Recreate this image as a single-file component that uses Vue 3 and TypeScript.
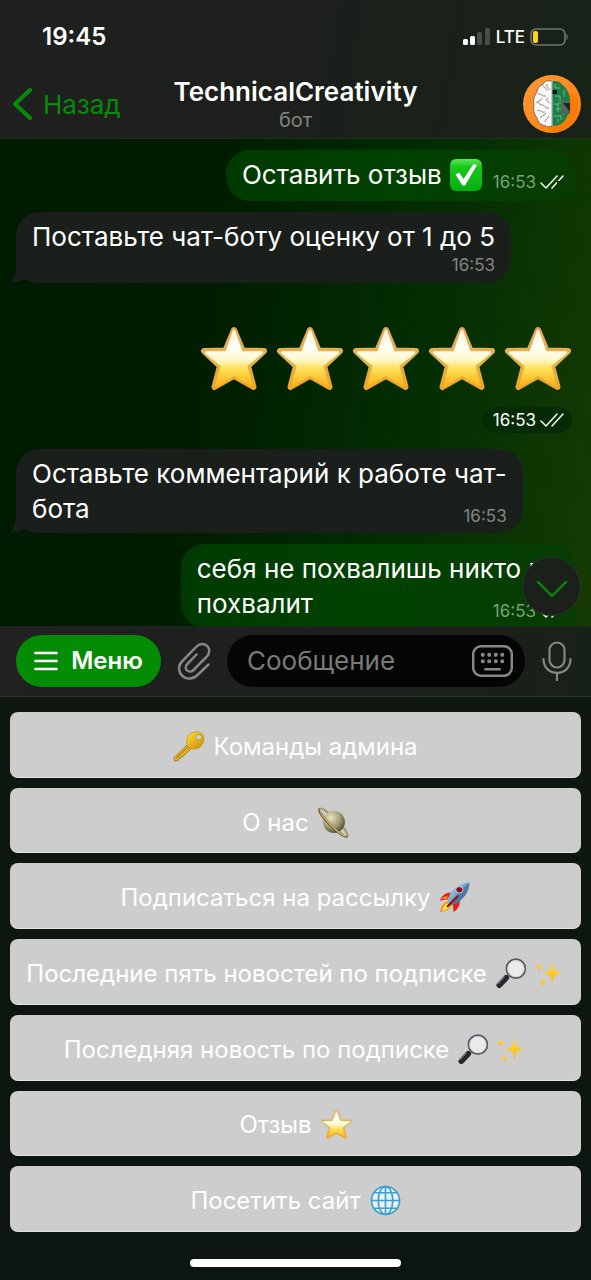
<script setup lang="ts">
import { ref } from 'vue'

interface Message {
  id: number
  out: boolean
  text: string
  time: string
  icon?: string
  layout: 'inline' | 'stacked' | 'overlay'
}

interface Key {
  label: string
  before?: string[]
  after?: string[]
}

const firstMessages: Message[] = [
  { id: 1, out: true, text: 'Оставить отзыв', icon: 'check', time: '16:53', layout: 'inline' },
  { id: 2, out: false, text: 'Поставьте чат-боту оценку от 1 до 5', time: '16:53', layout: 'stacked' },
]

const lastMessages: Message[] = [
  { id: 4, out: false, text: 'Оставьте комментарий к работе чат-\nбота', time: '16:53', layout: 'overlay' },
  { id: 5, out: true, text: 'себя не похвалишь никто не\nпохвалит', time: '16:53', layout: 'overlay' },
]

const keys: Key[] = [
  { label: 'Команды админа', before: ['key'] },
  { label: 'О нас', after: ['planet'] },
  { label: 'Подписаться на рассылку', after: ['rocket'] },
  { label: 'Последние пять новостей по подписке', after: ['lens', 'sparkles'] },
  { label: 'Последняя новость по подписке', after: ['lens', 'sparkles'] },
  { label: 'Отзыв', after: ['star'] },
  { label: 'Посетить сайт', after: ['globe'] },
]

const draft = ref('')
</script>

<template>
  <div class="screen">
    <svg class="defs" width="0" height="0" aria-hidden="true">
      <defs>
        <linearGradient id="g-star" x1="0" y1="0" x2="0" y2="1">
          <stop offset="0" stop-color="#fff3dc" />
          <stop offset=".3" stop-color="#fffef6" />
          <stop offset=".52" stop-color="#fff8cf" />
          <stop offset=".7" stop-color="#ffdf55" />
          <stop offset="1" stop-color="#fdb31a" />
        </linearGradient>
        <linearGradient id="g-edge" x1="0" y1="0" x2="0" y2="1">
          <stop offset="0" stop-color="#e9a455" />
          <stop offset=".5" stop-color="#e0b552" />
          <stop offset="1" stop-color="#eea42c" />
        </linearGradient>
        <linearGradient id="g-check" x1="0" y1="0" x2="0" y2="1">
          <stop offset="0" stop-color="#5fe35a" />
          <stop offset=".25" stop-color="#18c81c" />
          <stop offset="1" stop-color="#04ae12" />
        </linearGradient>
        <linearGradient id="g-key" x1="0" y1="0" x2="1" y2="1">
          <stop offset="0" stop-color="#ffdf3c" />
          <stop offset="1" stop-color="#c98a05" />
        </linearGradient>
        <radialGradient id="g-planet" cx=".35" cy=".3" r=".75">
          <stop offset="0" stop-color="#e8e4bc" />
          <stop offset=".55" stop-color="#a5a27b" />
          <stop offset="1" stop-color="#4e4c34" />
        </radialGradient>
        <linearGradient id="g-rocket" x1="0" y1="0" x2="1" y2="1">
          <stop offset="0" stop-color="#cfe6f5" />
          <stop offset=".5" stop-color="#6fa3cb" />
          <stop offset="1" stop-color="#2c4f7c" />
        </linearGradient>
        <linearGradient id="g-spark" x1="0" y1="0" x2="0" y2="1">
          <stop offset="0" stop-color="#ffd84c" />
          <stop offset="1" stop-color="#f5b915" />
        </linearGradient>
        <linearGradient id="g-avatar" x1="0" y1="0" x2="1" y2="1">
          <stop offset="0" stop-color="#ff9a3c" />
          <stop offset="1" stop-color="#ff7b05" />
        </linearGradient>
      </defs>
      <symbol id="star" viewBox="0 0 68 66">
        <path d="M34 4 42.500 24.500 64 25 48 40 53.500 61 34 50 14.500 61 20 40 4 25 25.500 24.500Z" fill="url(#g-edge)" stroke="url(#g-edge)" stroke-width="6" stroke-linejoin="round" />
        <path d="M34 5 41.500 26.500 62 26.500 46 39.500 51.500 59.500 34 48.500 16.500 59.500 22 39.500 6 26.500 26.500 26.500Z" fill="url(#g-star)" stroke="url(#g-star)" stroke-width="2.500" stroke-linejoin="round" />
      </symbol>
      <symbol id="check" viewBox="0 0 32 32">
        <rect width="32" height="32" rx="6" fill="url(#g-check)" />
        <path d="M5.500 15.500 9 13.500 13.500 20 23.500 5 27 6 15 26.500 12.500 26.500Z" fill="#fff" />
      </symbol>
      <symbol id="key" viewBox="0 0 32 32">
        <path d="m15.500 13.500 4 4L10 26.500 8.500 26l-.5 2-2 .3-.6 2.200-3.900.5L1 27.500Z" fill="url(#g-key)" stroke="#8f6508" stroke-width=".7" />
        <path d="M3 28 16 16" stroke="#8f6508" stroke-width="1" />
        <path d="M17 3.500C21-.5 28 0 31 4c2.500 4 .5 9.500-3 12.500-4 3-9 3-12 0s-2.500-9.500 1-13Z" fill="url(#g-key)" stroke="#c08d0a" stroke-width=".6" />
        <ellipse cx="26.500" cy="6.500" rx="3.200" ry="2.800" fill="#d6d2bd" stroke="#a3790c" stroke-width=".6" />
      </symbol>
      <symbol id="planet" viewBox="0 0 32 32">
        <g transform="rotate(45 16 16)">
          <ellipse cx="16" cy="16" rx="20" ry="4.200" fill="none" stroke="#a39a72" stroke-width="2.200" />
        </g>
        <circle cx="16.500" cy="15.500" r="11.300" fill="url(#g-planet)" />
        <g transform="rotate(45 16 16)" fill="none">
          <path d="M-4 16c0 5.600 40 5.600 40 0" stroke="#7c6331" stroke-width="2.600" />
          <path d="M-3 16c1 5 37 5 38 0" stroke="#dacb93" stroke-width="1" />
        </g>
      </symbol>
      <symbol id="rocket" viewBox="0 0 32 32">
        <path d="M14 11C8 10 3 14 1 19l8-1Z" fill="#e3231b" />
        <path d="M2 17 9 14l-1 4Z" fill="#ff8b23" />
        <path d="M21 18c1.500 5-1 10-6 13l-1-9Z" fill="#e3231b" />
        <path d="M9 20C4 21 2 26 1 31c5-1 10-2 12-7Z" fill="#f69219" />
        <path d="M9.500 22c-4 1-5 4-6 7.500 4-1 7-2 8-5.500Z" fill="#ffee4a" />
        <path d="M31.500.5C23 1 16 5 12 11L8.500 19l4.500 5 7.500-4C27 15.500 31 9 31.500.5Z" fill="url(#g-rocket)" />
        <path d="M31.500.5C22 8 15 15 13 24l7.500-4C27 15.500 31 9 31.500.5Z" fill="#3d6d9c" opacity=".6" />
        <path d="M19 15 9 25" stroke="#8b1510" stroke-width="2.400" stroke-linecap="round" />
        <ellipse cx="21" cy="8" rx="3.700" ry="3.200" fill="#7e1016" stroke="#dbe3ea" stroke-width=".8" />
      </symbol>
      <symbol id="lens" viewBox="0 0 32 32">
        <path d="m14.500 17.500-4 4" stroke="#999" stroke-width="3" />
        <path d="m10.500 20.500-7 7.500" stroke="#25272a" stroke-width="6" stroke-linecap="round" />
        <path d="m8.500 19.500-6.500 7" stroke="#777b80" stroke-width="1.200" stroke-linecap="round" />
        <circle cx="20.500" cy="11" r="9.800" fill="#e9eaec" stroke="#55595e" stroke-width="1.700" />
        <circle cx="20.500" cy="11" r="8.500" fill="none" stroke="#bfc3c7" stroke-width=".8" />
      </symbol>
      <symbol id="sparkles" viewBox="0 0 32 32" fill="url(#g-spark)">
        <path d="M19 3.500c1 8.500 2.500 10.500 10 12-7.500 1.500-9 3.500-10 12-1-8.500-2.500-10.500-10-12 7.500-1.500 9-3.500 10-12Z" />
        <path d="M5 4c.6 3.500 1.400 4.300 4.500 5C6.400 9.700 5.600 10.500 5 14c-.6-3.500-1.400-4.300-4.500-5C3.600 8.300 4.400 7.500 5 4Z" />
        <path d="M9 20c.6 3.500 1.200 4.300 4 5-2.800.7-3.400 1.500-4 5-.6-3.500-1.200-4.300-4-5 2.800-.7 3.400-1.500 4-5Z" />
      </symbol>
      <symbol id="globe" viewBox="0 0 32 32">
        <circle cx="16" cy="16" r="14.500" fill="#e8f2fa" />
        <g fill="none" stroke="#3c9fce" stroke-width="1.700">
          <circle cx="16" cy="16" r="14.500" />
          <ellipse cx="16" cy="16" rx="7.500" ry="14.500" />
          <path d="M16 1.500v29M1.500 16h29M4.500 8h23M4.500 24h23" />
        </g>
      </symbol>
      <symbol id="ticks" viewBox="0 0 24 16">
        <path d="m1 9 5 5L17 2M12 14 23 2" fill="none" stroke="currentColor" stroke-width="1.600" stroke-linecap="round" stroke-linejoin="round" />
      </symbol>
      <symbol id="tail" viewBox="0 0 24 20">
        <path d="M6 0C6 9 5 15 0 19.500c6 .3 11-1.500 14-3.500l10 4V0Z" fill="currentColor" />
      </symbol>
    </svg>

    <header class="top">
      <div class="status">
        <time class="clock">19:45</time>
        <div class="signals">
          <svg class="bars" viewBox="0 0 28 18" aria-hidden="true">
            <rect x="0" y="11" width="5" height="6" rx="1.500" fill="#fff" />
            <rect x="7" y="8" width="5" height="9" rx="1.500" fill="#fff" />
            <rect x="14" y="4" width="5" height="13" rx="1.500" fill="#474d48" />
            <rect x="22" y="0" width="5" height="17" rx="1.500" fill="#474d48" />
          </svg>
          <span class="lte">LTE</span>
          <svg class="battery" viewBox="0 0 38 18" aria-hidden="true">
            <rect x="1" y="1" width="34" height="16" rx="5" fill="none" stroke="#727672" stroke-width="1.600" />
            <path d="M36.500 6c1.600.5 1.600 5.500 0 6Z" fill="#727672" />
            <rect x="3" y="3" width="5" height="12" rx="2" fill="#ffd60a" />
          </svg>
        </div>
      </div>
      <div class="nav">
        <button class="back" type="button">
          <svg viewBox="0 0 22 34" aria-hidden="true">
            <path d="M20 3 5 17l15 14" fill="none" stroke="currentColor" stroke-width="4" stroke-linecap="round" stroke-linejoin="round" />
          </svg>
          <span>Назад</span>
        </button>
        <div class="peer">
          <h1>TechnicalCreativity</h1>
          <p>бот</p>
        </div>
        <button class="avatar" type="button" aria-label="TechnicalCreativity">
          <svg viewBox="0 0 58 58" aria-hidden="true">
            <circle cx="29" cy="29" r="29" fill="url(#g-avatar)" />
            <path d="M38 9 55 24a29 29 0 0 1-23 34L20 49Z" fill="#f27300" opacity=".55" />
            <path d="M29 6.500c-4-2-8 0-9 3-4 1-6 5-6 8-3 3-4 8-3 12-1 5 0 10 3 13 1 5 4 8 8 8 2 2 5 1.500 7 0Z" fill="#f7f7f5" stroke="#5b5b58" stroke-width=".8" />
            <path d="M20 11c3 1 2 4 5 4M15 19c4-1 4 3 8 2M13 27c3 0 3 3 6 3s3 4 7 3M14 36c4-2 4 2 8 1M17 43c2-3 5-2 6-5M24 9c-1 3 2 4 3 6M25 23c-3 2 0 4 2 5M22 47c0-3 3-3 4-6M19 23c-1 3-3 2-4 4" fill="none" stroke="#77706f" stroke-width=".8" />
            <path d="M29 6.500c4-1.500 8 0 10 3 4 3 7 8 8 14 1 8-1 15-4 20-3 5-7 8-14 7Z" fill="#1e7d49" />
            <path d="M32 9v4h5M32 21h5v5M31 29h4v8M31 41h7v4M35 47v-3M41 15v7M40 40l3-5M33 34h5M38 28h-3" fill="none" stroke="#69bd82" stroke-width="1" />
            <path d="M29 15h5v4h-5Z" fill="#111" />
            <path d="M38 26h9v13h-9Z" fill="#4f6a58" />
            <path d="M40 28h7v9Z" fill="#202422" />
            <path d="M29 6v45" stroke="#d9e0da" stroke-width=".8" />
          </svg>
        </button>
      </div>
    </header>

    <main class="chat">
      <article v-for="m in firstMessages" :key="m.id" class="bubble" :class="[m.layout, m.out ? 'out' : 'in']">
        <p class="text">{{ m.text }}<svg v-if="m.icon" class="emoji"><use :href="'#' + m.icon" /></svg></p>
        <span class="meta"><time>{{ m.time }}</time><svg v-if="m.out" class="ticks"><use href="#ticks" /></svg></span>
        <svg class="tail" aria-hidden="true"><use href="#tail" /></svg>
      </article>

      <article class="sticker">
        <div class="stars" role="img" aria-label="5">
          <svg v-for="n in 5" :key="n" class="big-star"><use href="#star" /></svg>
        </div>
        <span class="meta pill"><time>16:53</time><svg class="ticks"><use href="#ticks" /></svg></span>
      </article>

      <article v-for="m in lastMessages" :key="m.id" class="bubble" :class="[m.layout, m.out ? 'out' : 'in']">
        <p class="text">{{ m.text }}</p>
        <span class="meta"><time>{{ m.time }}</time><svg v-if="m.out" class="ticks"><use href="#ticks" /></svg></span>
        <svg class="tail" aria-hidden="true"><use href="#tail" /></svg>
      </article>

      <button class="to-bottom" type="button" aria-label="Вниз">
        <svg viewBox="0 0 30 18" aria-hidden="true">
          <path d="m1 2 14 14L29 2" fill="none" stroke="currentColor" stroke-width="2.400" stroke-linecap="round" stroke-linejoin="round" />
        </svg>
      </button>
    </main>

    <form class="composer" @submit.prevent>
      <button class="menu" type="button">
        <svg viewBox="0 0 24 20" aria-hidden="true">
          <path d="M1.500 2h21M1.500 10h21M1.500 18h21" stroke="currentColor" stroke-width="2.600" stroke-linecap="round" />
        </svg>
        <span>Меню</span>
      </button>
      <button class="tool clip" type="button" aria-label="Прикрепить">
        <svg viewBox="0 0 34 38" aria-hidden="true">
          <path d="M31.500 22.500 20.500 33c-4.500 4.500-11 4.800-15 1-4.500-4-4.500-10.500-.5-14.500L19 5c3.500-3.800 8-4 11-1.200 3.200 3 3 7.500-.5 11L16.500 28c-2 2-4.800 2-6.500.4-1.800-1.700-1.700-4.400.3-6.400l9.200-9.500" fill="none" stroke="currentColor" stroke-width="2.500" stroke-linecap="round" />
        </svg>
      </button>
      <div class="field">
        <input v-model="draft" type="text" placeholder="Сообщение" aria-label="Сообщение" />
        <button class="tool kbd" type="button" aria-label="Клавиатура">
          <svg viewBox="0 0 40 31" aria-hidden="true">
            <rect x="1.200" y="1.200" width="37.600" height="28.600" rx="7.500" fill="none" stroke="currentColor" stroke-width="2.400" />
            <path d="M10.500 9.500h.01M16.800 9.500h.01M23.200 9.500h.01M29.500 9.500h.01M10.500 15.800h.01M16.800 15.800h.01M23.200 15.800h.01M29.500 15.800h.01" stroke="currentColor" stroke-width="4" stroke-linecap="round" />
            <path d="M13 23.500h14" stroke="currentColor" stroke-width="2.400" stroke-linecap="round" />
          </svg>
        </button>
      </div>
      <button class="tool mic" type="button" aria-label="Голосовое сообщение">
        <svg viewBox="0 0 30 40" aria-hidden="true">
          <g fill="none" stroke="currentColor" stroke-width="2.200" stroke-linecap="round">
            <rect x="7.500" y="1.500" width="15" height="25" rx="7.500" />
            <path d="M1.500 18c0 18.500 27 18.500 27 0M15 32v7" />
          </g>
        </svg>
      </button>
    </form>

    <section class="keyboard">
      <div class="keys">
        <button v-for="k in keys" :key="k.label" class="key" type="button">
          <svg v-for="e in k.before" :key="e" class="emoji"><use :href="'#' + e" /></svg>
          <span>{{ k.label }}</span>
          <svg v-for="e in k.after" :key="e" class="emoji"><use :href="'#' + e" /></svg>
        </button>
      </div>
      <div class="home"></div>
    </section>
  </div>
</template>

<style>
html,
body {
  background: #0d1710;
}
</style>

<style scoped>
* {
  box-sizing: border-box;
}

.screen {
  display: flex;
  flex-direction: column;
  height: 100vh;
  overflow: hidden;
  color: #fff;
  font-family: Inter, "Noto Sans", sans-serif;
  font-size: 26px;
}

.defs {
  position: absolute;
}

svg {
  display: block;
  flex: none;
}

h1,
p {
  margin: 0;
}

button,
input {
  margin: 0;
  padding: 0;
  border: 0;
  background: none;
  color: inherit;
  font: inherit;
}

.top {
  flex: none;
  background: linear-gradient(100deg, #1f201f 0%, #1c1f1c 50%, #182217 100%);
  border-bottom: 1px solid #1d331d;
}

.status {
  display: flex;
  align-items: center;
  justify-content: space-between;
  height: 73px;
  padding: 0 23px 0 42px;
}

.clock {
  font-size: 24px;
  font-weight: 600;
}

.signals {
  display: flex;
  align-items: center;
  gap: 5px;
}

.bars {
  width: 28px;
  height: 18px;
}

.lte {
  font-size: 17px;
  font-weight: 500;
}

.battery {
  width: 38px;
  height: 18px;
}

.nav {
  display: grid;
  grid-template-columns: 1fr auto 1fr;
  align-items: center;
  height: 65px;
  padding: 0 10px 3px;
}

.back {
  display: flex;
  align-items: center;
  justify-self: start;
  gap: 11px;
  color: #078b07;
}

.back svg {
  width: 22px;
  height: 34px;
}

.peer {
  text-align: center;
}

.peer h1 {
  font-size: 26px;
  font-weight: 600;
  line-height: 32px;
}

.peer p {
  color: #818381;
  font-size: 20px;
  line-height: 24px;
}

.avatar {
  justify-self: end;
}

.avatar svg {
  width: 58px;
  height: 58px;
}

.chat {
  position: relative;
  display: flex;
  flex: 1 1 0;
  flex-direction: column;
  gap: 11px;
  min-height: 0;
  padding: 11px 16px 0;
  overflow: hidden;
  background: linear-gradient(98deg, #001c00 0%, #001d00 35%, #022c02 65%, #0b3503 85%, #163a04 100%);
}

.bubble {
  position: relative;
  display: grid;
  flex: none;
  padding: 7px 16px;
  border-radius: 24px;
}

.in {
  align-self: flex-start;
  background: #1b1f1c;
  color: #fff;
}

.out {
  align-self: flex-end;
  background: linear-gradient(90deg, #003a00, #004200 50%, #073b02);
}

.text {
  line-height: 35px;
  white-space: pre-line;
}

.inline {
  grid-template-columns: auto auto;
  column-gap: 11px;
  padding-bottom: 9px;
}

.inline .text {
  display: flex;
  align-items: center;
  gap: 8px;
}

.emoji {
  width: 32px;
  height: 32px;
}

.overlay .text,
.overlay .meta {
  grid-area: 1 / 1;
}

.meta {
  display: flex;
  align-items: center;
  align-self: end;
  justify-self: end;
  gap: 4px;
  color: #828682;
  font-size: 17px;
  line-height: 20px;
}

.stacked .meta {
  line-height: 22px;
}

.out .meta {
  margin-right: -5px;
  color: #78a178;
}

.ticks {
  width: 24px;
  height: 16px;
  color: #e9f6e9;
}

.tail {
  position: absolute;
  bottom: 0;
  left: -6px;
  width: 24px;
  height: 20px;
  color: #1b1f1c;
}

.out .tail {
  right: -6px;
  left: auto;
  color: #073b02;
  transform: scaleX(-1);
}

.sticker {
  display: flex;
  flex: none;
  flex-direction: column;
  align-items: flex-end;
  gap: 15px;
  padding: 32px 3px 5px 0;
}

.stars {
  display: flex;
  gap: 8px;
}

.big-star {
  width: 68px;
  height: 66px;
}

.pill {
  align-self: flex-end;
  padding: 3px 8px 3px 10px;
  border-radius: 14px;
  background: #052b04;
  color: #fff;
}

.to-bottom {
  position: absolute;
  right: 10px;
  bottom: 10px;
  display: grid;
  place-items: center;
  width: 59px;
  height: 59px;
  border: 1px solid #2a332a;
  border-radius: 50%;
  background: #1b201b;
  color: #078b07;
}

.to-bottom svg {
  width: 30px;
  height: 18px;
  margin-top: 4px;
}

.composer {
  display: flex;
  flex: none;
  align-items: center;
  gap: 16px;
  height: 71px;
  padding: 0 18px 2px 16px;
  border-top: 1px solid #1d291d;
  border-bottom: 1px solid #2b2e2b;
  background: linear-gradient(100deg, #202120 0%, #1d1f1d 60%, #182117 100%);
}

.menu {
  display: flex;
  align-items: center;
  justify-content: center;
  gap: 13px;
  width: 145px;
  height: 52px;
  border-radius: 26px;
  background: #058c05;
  font-size: 24px;
  font-weight: 600;
}

.menu svg {
  width: 24px;
  height: 20px;
}

.tool {
  color: #868886;
}

.clip svg {
  width: 34px;
  height: 38px;
}

.field {
  display: flex;
  flex: 1;
  align-items: center;
  min-width: 0;
  height: 52px;
  padding: 0 12px 0 20px;
  border-radius: 26px;
  background: #050505;
}

.field input {
  flex: 1;
  min-width: 0;
  outline: 0;
}

.field input::placeholder {
  color: #797b79;
  opacity: 1;
}

.kbd svg {
  width: 41px;
  height: 32px;
}

.mic svg {
  width: 32px;
  height: 40px;
}

.keyboard {
  display: flex;
  flex: none;
  flex-direction: column;
  padding: 15px 10px 13px;
  background: linear-gradient(180deg, #0e1810, #0c150f);
}

.keys {
  display: grid;
  grid-auto-rows: 1fr;
  gap: 10px;
  height: 520px;
}

.key {
  display: flex;
  align-items: center;
  justify-content: center;
  gap: 9px;
  padding-top: 4px;
  border-bottom: 1px solid #e2e2e2;
  border-radius: 8px;
  background: #cdcdcd;
  font-size: 24px;
  white-space: nowrap;
}

.key .emoji {
  width: 31px;
  height: 31px;
}

.key .emoji + .emoji {
  margin-left: -2px;
}

.home {
  align-self: center;
  width: 37%;
  height: 8px;
  margin-top: 27px;
  border-radius: 4px;
  background: #fff;
}
</style>
